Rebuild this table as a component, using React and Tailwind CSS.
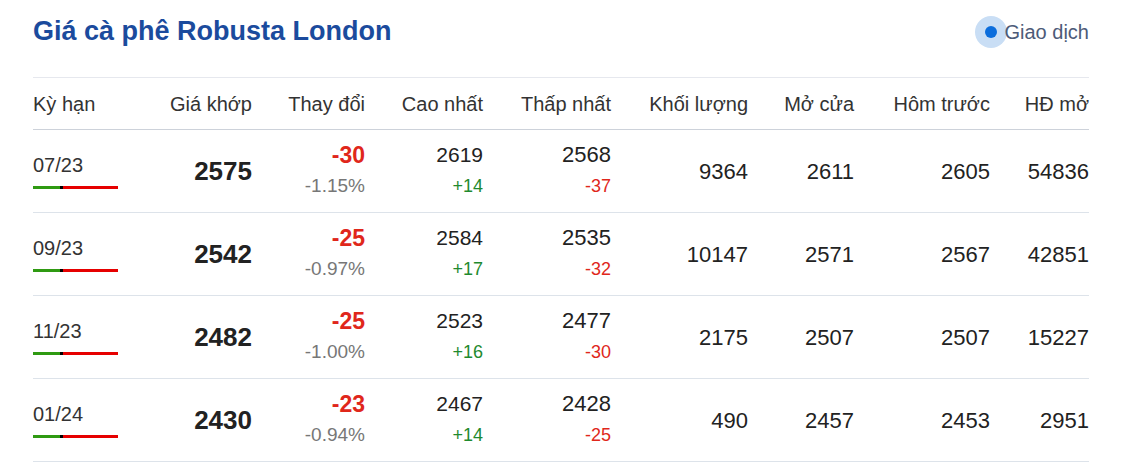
// Bảng giá cà phê Robusta London
const ROWS = [
  { kh: '07/23', gia: '2575', td: '-30', pct: '-1.15%', cao: '2619', caoD: '+14', thap: '2568', thapD: '-37', kl: '9364', mo: '2611', ht: '2605', hd: '54836' },
  { kh: '09/23', gia: '2542', td: '-25', pct: '-0.97%', cao: '2584', caoD: '+17', thap: '2535', thapD: '-32', kl: '10147', mo: '2571', ht: '2567', hd: '42851' },
  { kh: '11/23', gia: '2482', td: '-25', pct: '-1.00%', cao: '2523', caoD: '+16', thap: '2477', thapD: '-30', kl: '2175', mo: '2507', ht: '2507', hd: '15227' },
  { kh: '01/24', gia: '2430', td: '-23', pct: '-0.94%', cao: '2467', caoD: '+14', thap: '2428', thapD: '-25', kl: '490', mo: '2457', ht: '2453', hd: '2951' },
];

const GRID = 'grid grid-cols-[107px_112px_113px_118px_128px_137px_106px_136px_99px]';

export default function App() {
  return (
    <div className="w-[1130px] h-[470px] bg-white pl-[33px] text-[#222] font-['Liberation_Sans',Arial,sans-serif]">
      <div className="w-[1056px]">
        {/* Tiêu đề */}
        <div className="flex items-center justify-between h-[78px] border-b border-[#e6e8ee]">
          <h1 className="text-[27px] font-bold text-[#1b4b9d] -mt-[14px]">Giá cà phê Robusta London</h1>
          <div className="flex items-center -mt-[14px]">
            <span className="w-[32px] h-[32px] rounded-full bg-[#c9def5] flex items-center justify-center">
              <span className="w-[12px] h-[12px] rounded-full bg-[#0b6ddc]" />
            </span>
            <span className="text-[20px] text-[#4d5b78] -ml-[2px]">Giao dịch</span>
          </div>
        </div>

        {/* Tiêu đề cột */}
        <div className={`${GRID} h-[52px] items-center text-[20px] text-[#333] border-b border-[#cdd2da] text-right`}>
          <div className="text-left">Kỳ hạn</div>
          <div>Giá khớp</div>
          <div>Thay đổi</div>
          <div>Cao nhất</div>
          <div>Thấp nhất</div>
          <div>Khối lượng</div>
          <div>Mở cửa</div>
          <div>Hôm trước</div>
          <div>HĐ mở</div>
        </div>

        {ROWS.map((r) => (
          <div key={r.kh} className={`${GRID} h-[83px] items-center text-right border-b border-[#dde3ea] text-[22px] text-[#222]`}>
            <div className="text-left">
              <div className="text-[20px] leading-[22px] text-[#333]">{r.kh}</div>
              <div className="flex h-[3px] w-[85px] mt-[10px]">
                <span className="w-[27px] bg-[#2f9a12]" />
                <span className="w-[3px] bg-black" />
                <span className="flex-1 bg-[#e60000]" />
              </div>
            </div>
            <div className="text-[26px] font-bold">{r.gia}</div>
            <div className="flex flex-col items-end">
              <span className="text-[23px] font-bold text-[#e0271b] leading-[30px]">{r.td}</span>
              <span className="text-[19px] text-[#777] leading-[32px]">{r.pct}</span>
            </div>
            <div className="flex flex-col items-end">
              <span className="text-[21px] leading-[30px]">{r.cao}</span>
              <span className="text-[18px] text-[#1f8a2e] leading-[32px]">{r.caoD}</span>
            </div>
            <div className="flex flex-col items-end">
              <span className="text-[22px] leading-[30px]">{r.thap}</span>
              <span className="text-[18px] text-[#e0271b] leading-[32px]">{r.thapD}</span>
            </div>
            <div>{r.kl}</div>
            <div>{r.mo}</div>
            <div>{r.ht}</div>
            <div>{r.hd}</div>
          </div>
        ))}
      </div>
    </div>
  );
}
